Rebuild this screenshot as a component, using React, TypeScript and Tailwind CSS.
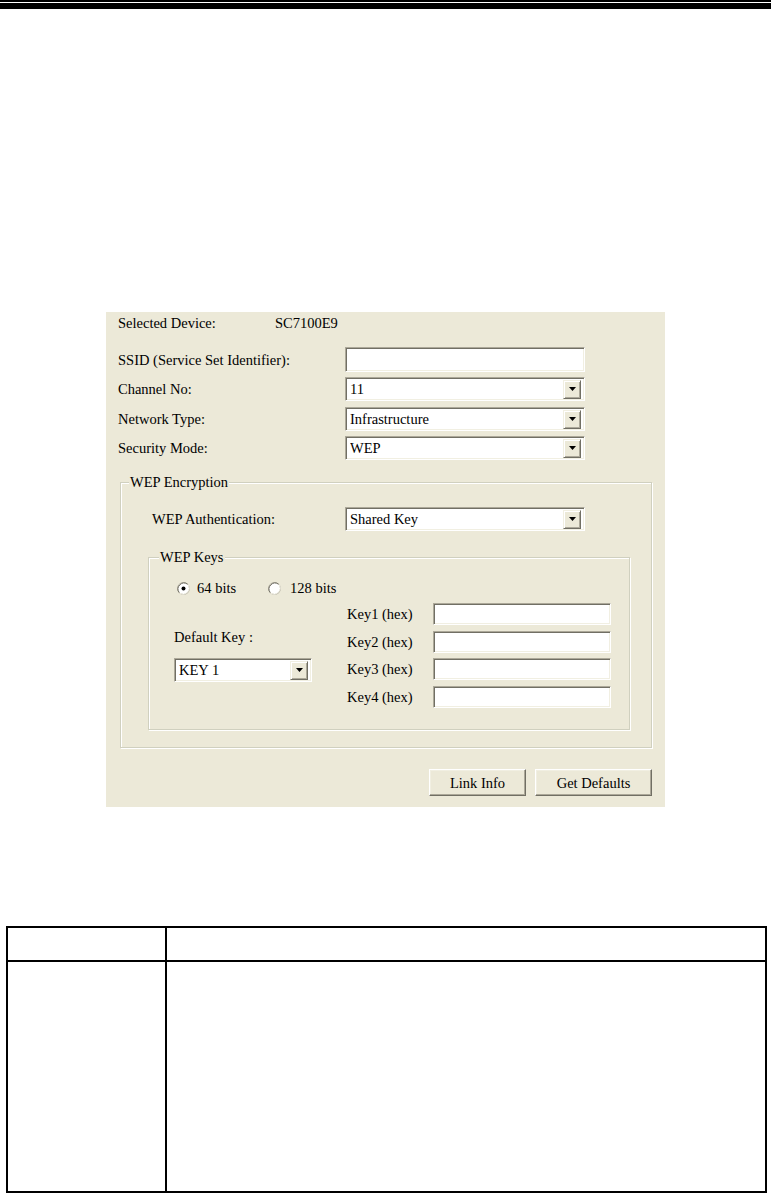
import React from 'react';

const font = { fontFamily: '"Liberation Serif", "DejaVu Serif", serif' };

const TextBox = ({ className = '', children }: { className?: string; children?: React.ReactNode }) => (
  <div
    className={`bg-white border border-t-[#ACA899] border-l-[#ACA899] border-b-white border-r-white shadow-[inset_1px_1px_0_#716F64,inset_-1px_-1px_0_#F1EFE2] flex items-center ${className}`}
  >
    {children}
  </div>
);

const Select = ({ value, className = '' }: { value: string; className?: string }) => (
  <TextBox className={`pl-[4px] pr-[3px] ${className}`}>
    <span className="flex-1 leading-[16px] truncate">{value}</span>
    <div className="w-[18px] h-[19px] bg-[#ECE9D8] border border-t-[#F1EFE2] border-l-[#F1EFE2] border-b-[#716F64] border-r-[#716F64] shadow-[inset_1px_1px_0_#fff,inset_-1px_-1px_0_#ACA899] flex items-center justify-center">
      <svg width="7" height="4" viewBox="0 0 7 4">
        <polygon points="0,0 7,0 3.5,4" fill="#000" />
      </svg>
    </div>
  </TextBox>
);

const Radio = ({ checked }: { checked?: boolean }) => (
  <svg width="13" height="13" viewBox="0 0 13 13" className="shrink-0">
    <circle cx="6.5" cy="6.5" r="6" fill="#fff" stroke="#ACA899" />
    <path d="M2.3 10.7 A6 6 0 0 1 10.7 2.3" fill="none" stroke="#716F64" />
    <path d="M10.9 2.5 A6 6 0 0 1 2.5 10.9" fill="none" stroke="#F1EFE2" />
    {checked && <circle cx="6.5" cy="6.5" r="2" fill="#000" />}
  </svg>
);

const Button = ({ label, className = '' }: { label: string; className?: string }) => (
  <div
    className={`h-[27px] bg-[#ECE9D8] border border-t-white border-l-white border-b-[#716F64] border-r-[#716F64] shadow-[inset_-1px_-1px_0_#ACA899,inset_1px_1px_0_#F1EFE2] flex items-center justify-center leading-[16px] ${className}`}
  >
    {label}
  </div>
);

const GroupBox = ({
  title,
  titleOffset,
  className = '',
  children,
}: {
  title: string;
  titleOffset: string;
  className?: string;
  children?: React.ReactNode;
}) => (
  <div className={`border border-[#D0D0BF] shadow-[inset_1px_1px_0_#fff,1px_1px_0_#fff] ${className}`}>
    <div className={`-mt-[9px] ${titleOffset} w-fit px-[1px] bg-[#ECE9D8] leading-[16px]`}>{title}</div>
    {children}
  </div>
);

const FormRow = ({ label, children, className = '' }: { label: string; children: React.ReactNode; className?: string }) => (
  <div className={`flex items-center h-[24px] ${className}`}>
    <div className="w-[239px] pl-[12px] leading-[16px]">{label}</div>
    {children}
  </div>
);

export default function App() {
  return (
    <div className="w-[771px] min-h-[1193px] bg-white text-black text-[14.5px]" style={font}>
      {/* header rule */}
      <div>
        <div className="h-[1.5px] bg-black" />
        <div className="h-[1.5px]" />
        <div className="h-[6px] bg-black" />
      </div>

      {/* dialog */}
      <div className="mx-auto mt-[303px] w-[559px] h-[495px] bg-[#ECE9D8] flex flex-col">
        <div className="flex pt-[3px] pl-[12px] leading-[16px]">
          <div className="w-[157px]">Selected Device:</div>
          <div>SC7100E9</div>
        </div>

        <FormRow label="SSID (Service Set Identifier):" className="mt-[16px] h-[25px]">
          <TextBox className="w-[240px] h-[25px]" />
        </FormRow>
        <FormRow label="Channel No:" className="mt-[5px]">
          <Select value="11" className="w-[240px] h-[24px]" />
        </FormRow>
        <FormRow label="Network Type:" className="mt-[6px]">
          <Select value="Infrastructure" className="w-[240px] h-[24px]" />
        </FormRow>
        <FormRow label="Security Mode:" className="mt-[5px]">
          <Select value="WEP" className="w-[240px] h-[24px]" />
        </FormRow>

        <GroupBox title="WEP Encryption" titleOffset="ml-[8px]" className="mt-[22px] ml-[14px] w-[532px] h-[266px]">
          <div className="flex items-center mt-[17px] h-[24px]">
            <div className="w-[224px] pl-[31px] leading-[16px]">WEP Authentication:</div>
            <Select value="Shared Key" className="w-[240px] h-[24px]" />
          </div>

          <GroupBox title="WEP Keys" titleOffset="ml-[10px]" className="mt-[26px] ml-[27px] w-[482px] h-[173px]">
            <div className="flex items-center h-[16px] mt-[15px] pl-[28px] leading-[16px]">
              <div className="w-[91px] flex items-center gap-[7px]">
                <Radio checked />
                <span>64 bits</span>
              </div>
              <div className="flex items-center gap-[9px]">
                <Radio />
                <span>128 bits</span>
              </div>
            </div>

            <div className="flex mt-[7px]">
              <div className="w-[198px] pl-[25px] flex flex-col">
                <div className="mt-[26px] leading-[16px]">Default Key :</div>
                <Select value="KEY 1" className="mt-[13px] w-[138px] h-[24px]" />
              </div>
              <div className="flex flex-col gap-[5.5px]">
                {['Key1 (hex)', 'Key2 (hex)', 'Key3 (hex)', 'Key4 (hex)'].map((k) => (
                  <div key={k} className="flex items-center h-[22px]">
                    <div className="w-[86px] leading-[16px]">{k}</div>
                    <TextBox className="w-[178px] h-[22px]" />
                  </div>
                ))}
              </div>
            </div>
          </GroupBox>
        </GroupBox>

        <div className="flex justify-end gap-[9px] pr-[13px] mt-[21px]">
          <Button label="Link Info" className="w-[97px]" />
          <Button label="Get Defaults" className="w-[117px]" />
        </div>
      </div>

      {/* table */}
      <div className="mt-[119px] ml-[6px] w-[761px] h-[267px] border-2 border-black grid grid-cols-[159px_1fr] grid-rows-[34px_1fr]">
        <div className="border-r-2 border-b-2 border-black" />
        <div className="border-b-2 border-black" />
        <div className="border-r-2 border-black" />
        <div />
      </div>
    </div>
  );
}
